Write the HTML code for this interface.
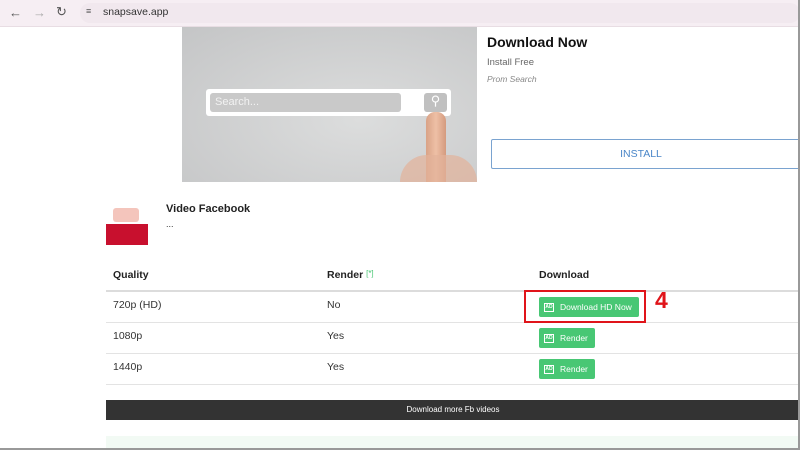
<!DOCTYPE html>
<html><head><meta charset="utf-8"><style>
*{margin:0;padding:0;box-sizing:border-box}
body{width:800px;height:450px;overflow:hidden;background:#fff;font-family:"Liberation Sans",Arial,sans-serif;position:relative;color:#222}
.abs{position:absolute}
.bar{left:0;top:0;width:800px;height:27px;background:#f6eef3;border-bottom:1px solid #e8dde3}
.btn{background:#48c774;color:#fff;font-size:8.5px;border-radius:2px;height:20px;display:flex;align-items:center;padding:0 7px 0 5px}
.ic{width:10px;height:9px;border:1px solid #fff;margin-right:6px;font-size:5px;line-height:7px;text-align:center;font-weight:bold}
.line{left:106px;width:694px;height:1px;background:#e3e3e3}
.td{font-size:10.5px;color:#333}
.th{font-size:10.5px;font-weight:bold}
</style></head><body>
<div class="abs bar"></div>
<div class="abs" style="left:9px;top:5px;font-size:13px;color:#555">&#8592;</div>
<div class="abs" style="left:33px;top:5px;font-size:13px;color:#aaa">&#8594;</div>
<div class="abs" style="left:56px;top:4px;font-size:13px;color:#555">&#8635;</div>
<div class="abs" style="left:80px;top:3px;width:720px;height:20px;border-radius:10px;background:#f1e8ee"></div>
<div class="abs" style="left:86px;top:6px;font-size:9px;color:#555">&#8801;</div>
<div class="abs" style="left:103px;top:6px;font-size:10.5px;color:#333">snapsave.app</div>
<div class="abs" style="left:182px;top:27px;width:295px;height:155px;background:radial-gradient(ellipse at 60% 60%,#dcdddd,#c4c5c6)"></div>
<div class="abs" style="left:206px;top:89px;width:245px;height:27px;background:#fff;border-radius:3px"></div>
<div class="abs" style="left:210px;top:93px;width:191px;height:19px;background:#c9c9c9;border-radius:3px;color:#f2f2f2;font-size:11px;padding:3px 5px">Search...</div>
<div class="abs" style="left:424px;top:93px;width:23px;height:19px;background:#c0c0c0;border-radius:3px;color:#fff;font-size:13px;text-align:center">&#9906;</div>
<div class="abs" style="left:426px;top:112px;width:20px;height:70px;background:linear-gradient(90deg,#d9a286,#eec0a6,#d49a7e);border-radius:9px 9px 0 0"></div>
<div class="abs" style="left:400px;top:155px;width:77px;height:27px;background:#e3b29a;border-radius:30px 30px 0 0;opacity:.7"></div>
<div class="abs" style="left:487px;top:34px;font-size:14px;font-weight:bold;color:#111">Download Now</div>
<div class="abs" style="left:487px;top:57px;font-size:9.5px;color:#666">Install Free</div>
<div class="abs" style="left:487px;top:74px;font-size:8.5px;color:#888;font-style:italic">Prom Search</div>
<div class="abs" style="left:491px;top:139px;width:310px;height:30px;border:1px solid #7aa3d0;border-radius:2px;color:#4a86c8;font-size:10.5px;text-align:center;line-height:28px;padding-right:10px">INSTALL</div>
<div class="abs" style="left:106px;top:224px;width:42px;height:21px;background:#c8102e"></div>
<div class="abs" style="left:113px;top:208px;width:26px;height:14px;background:#e98b7a;opacity:.5;border-radius:3px"></div>
<div class="abs" style="left:166px;top:203px;font-size:11px;font-weight:bold;color:#222">Video Facebook</div>
<div class="abs" style="left:166px;top:219px;font-size:9px;color:#333">...</div>
<div class="abs th" style="left:113px;top:269px">Quality</div>
<div class="abs th" style="left:327px;top:269px">Render <span style="color:#48c774;font-size:8px;font-weight:normal;vertical-align:top">[*]</span></div>
<div class="abs th" style="left:539px;top:269px">Download</div>
<div class="abs line" style="top:290px;height:2px;background:#dcdcdc"></div>
<div class="abs line" style="top:322px"></div>
<div class="abs line" style="top:353px"></div>
<div class="abs line" style="top:384px"></div>
<div class="abs td" style="left:113px;top:299px">720p (HD)</div>
<div class="abs td" style="left:327px;top:299px">No</div>
<div class="abs td" style="left:113px;top:330px">1080p</div>
<div class="abs td" style="left:327px;top:330px">Yes</div>
<div class="abs td" style="left:113px;top:361px">1440p</div>
<div class="abs td" style="left:327px;top:361px">Yes</div>
<div class="abs btn" style="left:539px;top:297px"><div class="ic">AD</div>Download HD Now</div>
<div class="abs btn" style="left:539px;top:328px"><div class="ic">AD</div>Render</div>
<div class="abs btn" style="left:539px;top:359px"><div class="ic">AD</div>Render</div>
<div class="abs" style="left:524px;top:290px;width:122px;height:33px;border:2px solid #e0141a"></div>
<div class="abs" style="left:655px;top:287px;font-size:23px;font-weight:bold;color:#e0141a">4</div>
<div class="abs" style="left:106px;top:400px;width:694px;height:20px;background:#333;color:#fff;font-size:8px;text-align:center;line-height:20px">Download more Fb videos</div>
<div class="abs" style="left:106px;top:436px;width:694px;height:14px;background:#f2faf4"></div>
<div class="abs" style="left:798px;top:0;width:2px;height:450px;background:#999"></div>
<div class="abs" style="left:0;top:448px;width:800px;height:2px;background:#999"></div>
</body></html>
